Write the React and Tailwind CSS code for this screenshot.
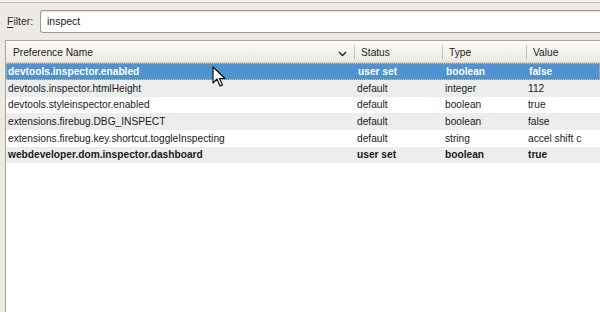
import React from 'react';

const prefs = [
  { name: 'devtools.inspector.enabled', status: 'user set', type: 'boolean', value: 'false', bold: true, h: 'h-[17px]' },
  { name: 'devtools.inspector.htmlHeight', status: 'default', type: 'integer', value: '112', h: 'h-[17px]' },
  { name: 'devtools.styleinspector.enabled', status: 'default', type: 'boolean', value: 'true', h: 'h-[16px]' },
  { name: 'extensions.firebug.DBG_INSPECT', status: 'default', type: 'boolean', value: 'false', h: 'h-[17px]' },
  { name: 'extensions.firebug.key.shortcut.toggleInspecting', status: 'default', type: 'string', value: 'accel shift c', h: 'h-[17px]' },
  { name: 'webdeveloper.dom.inspector.dashboard', status: 'user set', type: 'boolean', value: 'true', bold: true, h: 'h-[16px]' },
];

function Cursor() {
  return (
    <svg className="absolute left-[212px] top-[66px]" width="14" height="22" viewBox="0 0 14 22">
      <path d="M1 1 L1 17 L5 13 L8 20 L10.5 19 L7.5 12.5 L13 12.5 Z" fill="#ffffff" stroke="#111111" strokeWidth="1.2" strokeLinejoin="round" />
    </svg>
  );
}

function App() {
  return (
    <div className="relative w-[600px] h-[312px] overflow-hidden bg-[#edeae5] font-['Liberation_Sans',Arial,sans-serif] text-[10.2px] text-[#1a1a1a]">
      <div className="h-[2px] bg-[#f3f1ed]"></div>
      <div className="h-px bg-[#c6c0b5]"></div>

      <div className="mt-[7px] flex items-center">
        <label className="w-[40px] pl-[7px] text-[10.5px] text-[#2a2a2a]">
          <span className="underline underline-offset-2">F</span>ilter:
        </label>
        <div className="flex-1 h-[23px] flex items-center bg-white border border-r-0 border-[#a39c8e] rounded-l-[3px] pl-[6px] shadow-[inset_0_1px_1px_rgba(0,0,0,0.12)]">
          <span className="text-[10.5px]">inspect</span>
        </div>
      </div>

      <div className="mt-[7px] ml-[5px] h-[272px] bg-white border-l border-t border-[#aaa398]">
        <div className="flex h-[22px] items-center pt-[3px] bg-gradient-to-b from-[#fdfcfb] to-[#ebe8e3] border-b border-[#d4cfc7]">
          <div className="relative w-[348px] h-full flex items-center pl-[7px]">
            Preference Name
            <svg className="absolute right-[7px] top-[7px]" width="9" height="6" viewBox="0 0 9 6">
              <path d="M1 1 L4.5 4.5 L8 1" fill="none" stroke="#222" strokeWidth="1.4" />
            </svg>
          </div>
          <div className="w-[88px] h-full flex items-center pl-[7px] relative">
            <div className="absolute left-0 top-[1px] bottom-[3px] w-px bg-[#c7c1b7]"></div>
            Status
          </div>
          <div className="w-[84px] h-full flex items-center pl-[7px] relative">
            <div className="absolute left-0 top-[1px] bottom-[3px] w-px bg-[#c7c1b7]"></div>
            Type
          </div>
          <div className="flex-1 h-full flex items-center pl-[7px] relative">
            <div className="absolute left-0 top-[1px] bottom-[3px] w-px bg-[#c7c1b7]"></div>
            Value
          </div>
        </div>

        {prefs.map((p, i) => {
          const selected = i === 0;
          const bg = selected ? 'bg-[#5093d3] text-white border border-dotted border-[#d8c27a]' : i % 2 === 1 ? 'bg-[#ededed]' : 'bg-white';
          return (
            <div key={p.name} className={`flex items-center ${p.h} ${bg} ${p.bold ? 'font-bold' : ''}`}>
              <div className={`w-[348px] ${selected ? 'pl-px' : 'pl-[2px]'} whitespace-nowrap`}>{p.name}</div>
              <div className="w-[88px] pl-[3px]">{p.status}</div>
              <div className="w-[84px] pl-[3px]">{p.type}</div>
              <div className="flex-1 pl-[2px] whitespace-nowrap">{p.value}</div>
            </div>
          );
        })}
      </div>

      <Cursor />
    </div>
  );
}

export default App;
